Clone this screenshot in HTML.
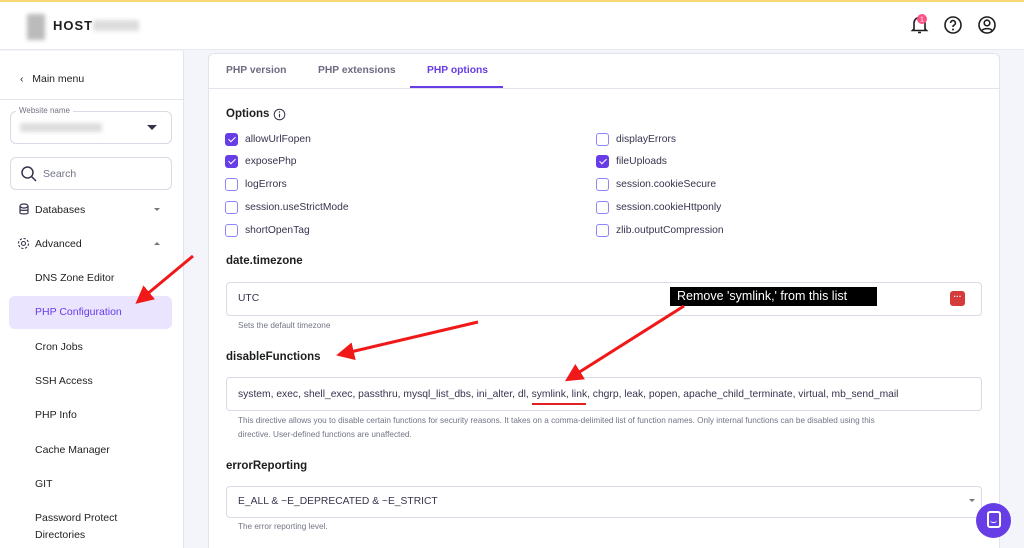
<!DOCTYPE html>
<html style="width:1024px;height:548px;overflow:hidden"><head><meta charset="utf-8"><style>
*{margin:0;padding:0;box-sizing:border-box}
html,body{overflow:hidden}
body{width:1024px;height:548px;overflow:hidden;position:relative;background:#f4f4fb;font-family:"Liberation Sans",sans-serif;color:#2f1c6a;}
.a{position:absolute;white-space:nowrap}
.t{font-size:10.3px;color:#36344d}
.h{font-size:11.5px;font-weight:bold;color:#1d1e20}
.cb{position:absolute;width:13px;height:13px;border:1.3px solid #8c85ff;border-radius:3px;background:#fff}
.cb.on{background:#673de6;border-color:#673de6}
.cb.on:after{content:"";position:absolute;left:3.5px;top:1px;width:3px;height:6px;border:solid #fff;border-width:0 1.6px 1.6px 0;transform:rotate(45deg)}
.in{position:absolute;background:#fff;border:1px solid #dad9e6;border-radius:4px}
.help{font-size:8.2px;color:#727586}
.nav{font-size:10.5px;color:#1d1e20}
</style></head><body>
<div class="a" style="left:0;top:0;width:1024px;height:2px;background:#f7d774"></div>
<div class="a" style="left:0;top:2px;width:1024px;height:48px;background:#fff;border-bottom:1px solid #e8e8f0"></div>
<div class="a" style="left:27px;top:14px;width:18px;height:26px;background:#bbb;filter:blur(2px)"></div>
<div class="a" style="left:53px;top:18px;font-size:13px;font-weight:bold;color:#1d1e20;letter-spacing:1px">HOST</div>
<div class="a" style="left:93px;top:20px;width:46px;height:11px;background:#ddd;filter:blur(2px)"></div>
<svg class="a" style="left:908px;top:12px" width="24" height="24" viewBox="0 0 24 24"><path d="M6 17V11a5.5 5.5 0 0 1 11 0v6l1.5 1.5h-14Z M10 20.5h3" fill="none" stroke="#1d1e20" stroke-width="1.6"/><circle cx="14" cy="7" r="5" fill="#fc5185"/><text x="14" y="9.5" font-size="7" fill="#fff" text-anchor="middle" font-family="Liberation Sans">1</text></svg>
<svg class="a" style="left:943px;top:15px" width="20" height="20" viewBox="0 0 20 20"><circle cx="10" cy="10" r="8" fill="none" stroke="#1d1e20" stroke-width="1.6"/><path d="M7.6 8a2.4 2.4 0 1 1 3.3 2.2c-.6.3-.9.7-.9 1.4v.4" fill="none" stroke="#1d1e20" stroke-width="1.6"/><circle cx="10" cy="14.5" r="1" fill="#1d1e20"/></svg>
<svg class="a" style="left:977px;top:15px" width="20" height="20" viewBox="0 0 20 20"><circle cx="10" cy="10" r="8" fill="none" stroke="#1d1e20" stroke-width="1.6"/><circle cx="10" cy="8" r="2.8" fill="none" stroke="#1d1e20" stroke-width="1.6"/><path d="M5 15.5c1.5-2.5 8.5-2.5 10 0" fill="none" stroke="#1d1e20" stroke-width="1.6"/></svg>

<div class="a" style="left:0;top:51px;width:184px;height:497px;background:#fff;border-right:1px solid #e3e3ec"></div>
<div class="a nav" style="left:20px;top:73px">‹&nbsp;&nbsp; Main menu</div>
<div class="a" style="left:0;top:99px;width:183px;height:1px;background:#e3e3ec"></div>
<div class="in" style="left:10px;top:111px;width:162px;height:33px;border-radius:6px"></div>
<div class="a" style="left:16px;top:106px;font-size:8px;color:#727586;background:#fff;padding:0 3px">Website name</div>
<div class="a" style="left:20px;top:123px;width:82px;height:9px;background:#ddd;filter:blur(2px)"></div>
<div class="a" style="left:147px;top:125px;border:5px solid transparent;border-top:5px solid #36344d;border-bottom:0"></div>
<div class="in" style="left:10px;top:157px;width:162px;height:33px;border-radius:6px"></div>
<svg class="a" style="left:20px;top:165px" width="18" height="18" viewBox="0 0 18 18"><circle cx="7.5" cy="7.5" r="5.5" fill="none" stroke="#36344d" stroke-width="1.5"/><path d="M11.5 11.5l4.5 4.5" stroke="#36344d" stroke-width="1.5"/></svg>
<div class="a" style="left:43px;top:168px;font-size:10.5px;color:#727586">Search</div>
<svg class="a" style="left:18px;top:203px" width="12" height="13" viewBox="0 0 12 13"><ellipse cx="6" cy="3" rx="4" ry="2" fill="none" stroke="#36344d" stroke-width="1.2"/><path d="M2 3v7c0 1.2 8 1.2 8 0V3M2 6.5c0 1.2 8 1.2 8 0" fill="none" stroke="#36344d" stroke-width="1.2"/></svg>
<div class="a nav" style="left:35px;top:204px">Databases</div>
<div class="a" style="left:154px;top:208px;border:3px solid transparent;border-top:3px solid #777;border-bottom:0"></div>
<svg class="a" style="left:17px;top:237px" width="13" height="13" viewBox="0 0 13 13"><circle cx="6.5" cy="6.5" r="2" fill="none" stroke="#36344d" stroke-width="1.1"/><circle cx="6.5" cy="6.5" r="5" fill="none" stroke="#36344d" stroke-width="1.1" stroke-dasharray="2.4 1.5"/></svg>
<div class="a nav" style="left:35px;top:238px">Advanced</div>
<div class="a" style="left:154px;top:242px;border:3px solid transparent;border-bottom:3px solid #777;border-top:0"></div>
<div class="a nav" style="left:35px;top:272px">DNS Zone Editor</div>
<div class="a" style="left:9px;top:296px;width:163px;height:33px;background:#ebe4ff;border-radius:6px"></div>
<div class="a nav" style="left:35px;top:306px;color:#673de6">PHP Configuration</div>
<div class="a nav" style="left:35px;top:341px">Cron Jobs</div>
<div class="a nav" style="left:35px;top:375px">SSH Access</div>
<div class="a nav" style="left:35px;top:409px">PHP Info</div>
<div class="a nav" style="left:35px;top:444px">Cache Manager</div>
<div class="a nav" style="left:35px;top:478px">GIT</div>
<div class="a nav" style="left:35px;top:512px">Password Protect</div>
<div class="a nav" style="left:35px;top:529px">Directories</div>

<div class="a" style="left:208px;top:53px;width:792px;height:495px;background:#fff;border:1px solid #e3e3ec;border-bottom:0;border-radius:6px 6px 0 0"></div>
<div class="a" style="left:209px;top:88px;width:790px;height:1px;background:#e3e3ec"></div>
<div class="a" style="left:226px;top:65px;font-size:10.3px;font-weight:bold;color:#6d6b80">PHP version</div>
<div class="a" style="left:318px;top:65px;font-size:10.3px;font-weight:bold;color:#6d6b80">PHP extensions</div>
<div class="a" style="left:427px;top:65px;font-size:10.3px;font-weight:bold;color:#673de6">PHP options</div>
<div class="a" style="left:410px;top:86px;width:93px;height:2px;background:#673de6"></div>

<div class="a h" style="left:226px;top:108px">Options</div>
<svg class="a" style="left:273px;top:108px" width="13" height="13" viewBox="0 0 13 13"><circle cx="6.5" cy="6.5" r="5.3" fill="none" stroke="#36344d" stroke-width="1"/><path d="M6.5 5.8v3.6" stroke="#36344d" stroke-width="1.1"/><circle cx="6.5" cy="4" r=".7" fill="#36344d"/></svg>

<div class="cb on" style="left:225px;top:133px"></div><div class="a t" style="left:245px;top:134px">allowUrlFopen</div>
<div class="cb on" style="left:225px;top:155px"></div><div class="a t" style="left:245px;top:156px">exposePhp</div>
<div class="cb" style="left:225px;top:178px"></div><div class="a t" style="left:245px;top:179px">logErrors</div>
<div class="cb" style="left:225px;top:201px"></div><div class="a t" style="left:245px;top:202px">session.useStrictMode</div>
<div class="cb" style="left:225px;top:224px"></div><div class="a t" style="left:245px;top:225px">shortOpenTag</div>
<div class="cb" style="left:596px;top:133px"></div><div class="a t" style="left:616px;top:134px">displayErrors</div>
<div class="cb on" style="left:596px;top:155px"></div><div class="a t" style="left:616px;top:156px">fileUploads</div>
<div class="cb" style="left:596px;top:178px"></div><div class="a t" style="left:616px;top:179px">session.cookieSecure</div>
<div class="cb" style="left:596px;top:201px"></div><div class="a t" style="left:616px;top:202px">session.cookieHttponly</div>
<div class="cb" style="left:596px;top:224px"></div><div class="a t" style="left:616px;top:225px">zlib.outputCompression</div>

<div class="a h" style="left:226px;top:255px">date.timezone</div>
<div class="in" style="left:226px;top:282px;width:756px;height:34px"></div>
<div class="a t" style="left:238px;top:293px">UTC</div>
<div class="a" style="left:950px;top:291px;width:15px;height:15px;background:#d63b3b;border-radius:3px;color:#fff;font-size:8px;text-align:center;line-height:12px;font-weight:bold">···</div>
<div class="a help" style="left:238px;top:321px">Sets the default timezone</div>

<div class="a h" style="left:226px;top:351px">disableFunctions</div>
<div class="in" style="left:226px;top:377px;width:756px;height:34px"></div>
<div class="a t" style="left:238px;top:389px">system, exec, shell_exec, passthru, mysql_list_dbs, ini_alter, dl, symlink, link, chgrp, leak, popen, apache_child_terminate, virtual, mb_send_mail</div>
<div class="a" style="left:532px;top:403px;width:54px;height:1.5px;background:#e02020"></div>
<div class="a help" style="left:238px;top:416px">This directive allows you to disable certain functions for security reasons. It takes on a comma-delimited list of function names. Only internal functions can be disabled using this</div>
<div class="a help" style="left:238px;top:430px">directive. User-defined functions are unaffected.</div>

<div class="a h" style="left:226px;top:460px">errorReporting</div>
<div class="in" style="left:226px;top:486px;width:756px;height:32px"></div>
<div class="a t" style="left:238px;top:496px">E_ALL &amp; ~E_DEPRECATED &amp; ~E_STRICT</div>
<div class="a" style="left:969px;top:499px;border:3px solid transparent;border-top:3px solid #777;border-bottom:0"></div>
<div class="a help" style="left:238px;top:522px">The error reporting level.</div>

<div class="a" style="left:976px;top:503px;width:35px;height:35px;border-radius:50%;background:#673de6"></div>
<div class="a" style="left:987px;top:511px;width:14px;height:17px;border:2px solid #fff;border-radius:3px"></div>
<div class="a" style="left:990px;top:520px;width:7px;height:3px;border-bottom:1.5px solid #fff;border-radius:0 0 4px 4px"></div>

<div class="a" style="left:670px;top:287px;width:207px;height:19px;background:#000;color:#fff;font-size:12.5px;line-height:19px;padding-left:7px">Remove 'symlink,' from this list</div>

<svg class="a" style="left:0;top:0" width="1024" height="548">
<defs><marker id="m" markerWidth="6" markerHeight="6" refX="4" refY="3" orient="auto"><path d="M0 0L6 3L0 6Z" fill="#f01818"/></marker></defs>
<path d="M193 256L140 300" stroke="#f01818" stroke-width="3" marker-end="url(#m)"/>
<path d="M478 322L342 354" stroke="#f01818" stroke-width="3" marker-end="url(#m)"/>
<path d="M684 306L570 378" stroke="#f01818" stroke-width="3" marker-end="url(#m)"/>
</svg>
</body></html>
